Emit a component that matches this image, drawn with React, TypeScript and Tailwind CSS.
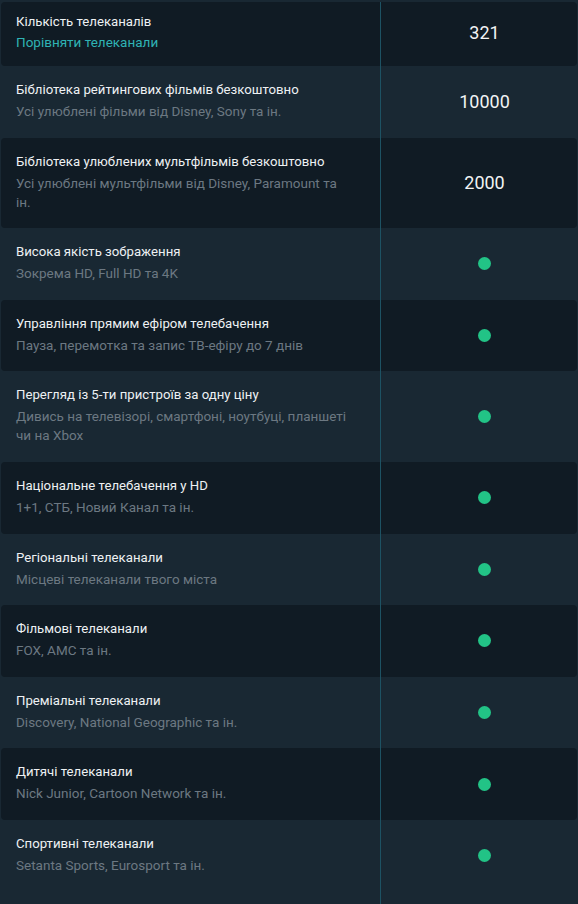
type Row = {
  title: string;
  sub: React.ReactNode;
  value?: string;
  link?: boolean;
};

const rows: Row[] = [
  { title: "Кількість телеканалів", sub: "Порівняти телеканали", value: "321", link: true },
  { title: "Бібліотека рейтингових фільмів безкоштовно", sub: "Усі улюблені фільми від Disney, Sony та ін.", value: "10000" },
  {
    title: "Бібліотека улюблених мультфільмів безкоштовно",
    sub: (
      <>
        Усі улюблені мультфільми від Disney, Paramount та
        <br />
        ін.
      </>
    ),
    value: "2000",
  },
  { title: "Висока якість зображення", sub: "Зокрема HD, Full HD та 4K" },
  { title: "Управління прямим ефіром телебачення", sub: "Пауза, перемотка та запис ТВ-ефіру до 7 днів" },
  { title: "Перегляд із 5-ти пристроїв за одну ціну", sub: "Дивись на телевізорі, смартфоні, ноутбуці, планшеті чи на Xbox" },
  { title: "Національне телебачення у HD", sub: "1+1, СТБ, Новий Канал та ін." },
  { title: "Регіональні телеканали", sub: "Місцеві телеканали твого міста" },
  { title: "Фільмові телеканали", sub: "FOX, AMC та ін." },
  { title: "Преміальні телеканали", sub: "Discovery, National Geographic та ін." },
  { title: "Дитячі телеканали", sub: "Nick Junior, Cartoon Network та ін." },
  { title: "Спортивні телеканали", sub: "Setanta Sports, Eurosport та ін." },
];

export default function App() {
  return (
    <div
      className="flex min-h-screen w-full flex-col bg-[#192833] pt-[2px] px-[1px]"
      style={{ fontFamily: "Roboto, 'Noto Sans', sans-serif" }}
    >
      {rows.map((row, i) => {
        const dark = i % 2 === 0;
        const first = i === 0;
        return (
          <div
            key={row.title}
            className={`flex ${dark ? "rounded-[4px] bg-[#101b24]" : "bg-transparent"}`}
          >
            <div
              className={`w-[379px] shrink-0 pl-[15px] pr-[24px] ${
                first ? "pt-[12px] pb-[14px]" : "pt-[16px] pb-[16.6px]"
              }`}
            >
              <div className="text-[13.2px] leading-[16px] text-[#eef1f3]">{row.title}</div>
              <div
                className={`text-[13.5px] leading-[19px] ${
                  row.link ? "mt-[3px] text-[#2fb3b4]" : "mt-[4px] text-[#6c7882]"
                }`}
              >
                {row.sub}
              </div>
            </div>
            <div
              className={`flex flex-1 items-center justify-center border-l border-[#1d5263] pl-[11px] ${
                first ? "pb-[4px]" : ""
              }`}
            >
              {row.value ? (
                <span className="text-[18px] text-[#f2f4f5]">{row.value}</span>
              ) : (
                <span className="h-[13px] w-[13px] rounded-full bg-[#22c386]" />
              )}
            </div>
          </div>
        );
      })}
      {/* column divider continues to the bottom edge */}
      <div className="flex flex-1">
        <div className="w-[379px] shrink-0" />
        <div className="flex-1 border-l border-[#1d5263]" />
      </div>
    </div>
  );
}
